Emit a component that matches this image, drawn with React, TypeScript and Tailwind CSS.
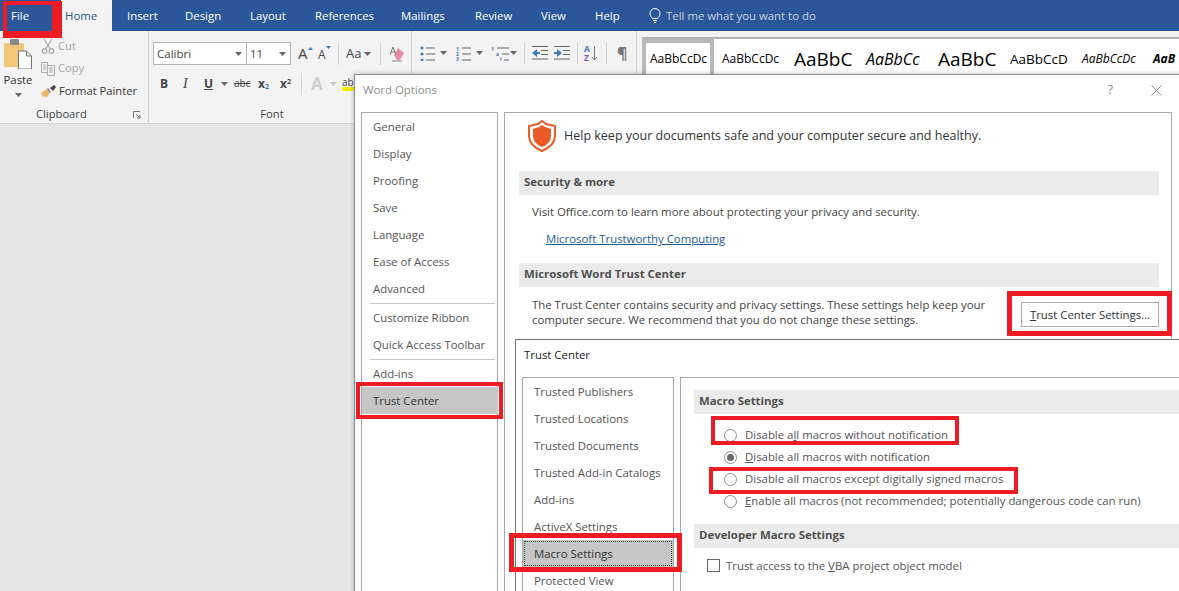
import React from "react";

const tabs: [string, number, string][] = [
  ["File", 61, "pl-[11px] text-white"],
  ["Home", 51, "pl-[4px] bg-[#f3f3f3] text-[#2b579a] justify-start"],
  ["Insert", 58, "pl-[15px] text-white"],
  ["Design", 65, "pl-[15px] text-white"],
  ["Layout", 65, "pl-[15px] text-white"],
  ["References", 86, "pl-[15px] text-white"],
  ["Mailings", 74, "pl-[15px] text-white"],
  ["Review", 66, "pl-[15px] text-white"],
  ["View", 54, "pl-[15px] text-white"],
  ["Help", 54, "pl-[15px] text-white"],
];

const Caret = ({ className = "" }: { className?: string }) => (
  <svg width="7" height="4" viewBox="0 0 7 4" className={className}>
    <path d="M0 0h7L3.5 4z" fill="#666" />
  </svg>
);

const Sep = ({ className = "" }: { className?: string }) => (
  <div className={"w-px bg-[#d2d2d2] " + className} />
);

function Clipboard() {
  return (
    <div className="w-[149px] shrink-0 border-r border-[#d2d2d2] flex flex-col h-full">
      <div className="flex h-[76px]">
        <div className="w-[36px] flex flex-col items-center pt-[8px]">
          <svg width="29" height="30" viewBox="0 0 29 30">
            <rect x="0" y="4" width="20" height="24" rx="1" fill="#f0c778" />
            <rect x="6" y="0" width="9" height="6" rx="1" fill="#8a8a8a" />
            <path d="M14.500 12h8l5 5v13h-13z" fill="#fff" stroke="#777" />
            <path d="M22.500 12v5h5" fill="none" stroke="#777" />
          </svg>
          <span className="text-[11.4px] leading-[16px] mt-[3px] text-[#333]">Paste</span>
          <Caret className="mt-[5px]" />
        </div>
        <div className="flex flex-col pt-[4px] pl-[5px] text-[11.2px]">
          <div className="flex items-center gap-[3px] text-[#a6a6a6] h-[22.500px]">
            <svg width="14" height="16" viewBox="0 0 14 16" fill="none" stroke="#adadad" strokeWidth="1.300">
              <circle cx="3.500" cy="13" r="2.300" />
              <circle cx="10.500" cy="13" r="2.300" />
              <path d="M4.500 11L11 1M9.500 11L3 1" />
            </svg>
            Cut
          </div>
          <div className="flex items-center gap-[3px] text-[#a6a6a6] h-[22.500px]">
            <svg width="14" height="14" viewBox="0 0 14 14" fill="none" stroke="#adadad">
              <path d="M.5.5h6v10h-6zM6.500 3.500h7v10h-7zM2 3h3M2 5h3M2 7h3M8 6h4M8 8h4M8 10h4" />
            </svg>
            Copy
          </div>
          <div className="flex items-center gap-[3px] text-[#333] h-[22.500px]">
            <svg width="15" height="14" viewBox="0 0 15 14">
              <path d="M0 9l6-4 3 4-4 5-1-2-2 1-1-2z" fill="#e9b96a" />
              <path d="M6 5l3 4 1-1-3-4z" fill="#777" />
              <path d="M9 4l4-3 2 2-3 4z" fill="#444" />
            </svg>
            Format Painter
          </div>
        </div>
      </div>
      <div className="flex items-center h-[15px] pl-[36px] text-[11.2px] text-[#444]">
        <span>Clipboard</span>
        <svg width="8" height="8" viewBox="0 0 8 8" className="ml-[46px]" fill="none" stroke="#777">
          <path d="M.5 7V.5H7M3 3l4 4M7 4v3H4" />
        </svg>
      </div>
    </div>
  );
}

function FontGroup() {
  return (
    <div className="w-[263px] shrink-0 border-r border-[#d2d2d2] flex flex-col h-full">
      <div className="flex items-center pl-[4px] pt-[11px] h-[34px] text-[#444]">
        <div className="w-[94px] h-[23px] bg-white border border-[#b5b5b5] flex items-center pl-[3px] pr-[4px] justify-between text-[11.5px]">
          Calibri <Caret />
        </div>
        <div className="w-[44px] h-[23px] bg-white border border-[#b5b5b5] border-l-0 flex items-center pl-[3px] pr-[4px] justify-between text-[11.5px]">
          11 <Caret />
        </div>
        <div className="ml-[7px] w-[20px] flex items-start text-[15px] leading-none">
          A
          <svg width="5" height="3" viewBox="0 0 5 3" className="mt-[1px]"><path d="M0 3h5L2.500 0z" fill="#3f7ab8" /></svg>
        </div>
        <div className="w-[20px] flex items-start text-[12px] leading-none mt-[3px]">
          A
          <svg width="5" height="3" viewBox="0 0 5 3" className="-mt-[3px]"><path d="M0 0h5L2.500 3z" fill="#3f7ab8" /></svg>
        </div>
        <Sep className="h-[22px]" />
        <div className="ml-[7px] w-[34px] flex items-center gap-[3px] text-[13px]">Aa<Caret /></div>
        <Sep className="h-[22px]" />
        <svg width="16" height="16" viewBox="0 0 16 16" className="ml-[9px]">
          <path d="M8 2l6 5-4 7H7L4 9z" fill="#eb8ba1" />
          <path d="M2 15h10" stroke="#888" />
          <path d="M0 9l3-8 3 8M1 6h4" fill="none" stroke="#777" />
        </svg>
      </div>
      <div className="flex items-center h-[27px] mt-[2px] pt-[6px] pl-[11px] text-[#444] text-[12px] font-bold">
        <span className="w-[23px]">B</span>
        <span className="w-[21px] italic font-['Liberation_Serif'] text-[14px] font-normal">I</span>
        <span className="w-[17px] underline">U</span>
        <Caret className="mr-[6px]" />
        <span className="w-[24px] text-[10px] font-normal line-through">abc</span>
        <span className="w-[22px]">x<sub className="text-[7px] text-[#2b7cd3]">2</sub></span>
        <span className="w-[21px]">x<sup className="text-[7px]">2</sup></span>
        <Sep className="h-[22px]" />
        <span className="ml-[9px] w-[19px] text-[#d0d0d0] text-[17px] font-bold">A</span>
        <Caret className="mr-[5px] opacity-30" />
        <div className="flex flex-col items-start">
          <span className="text-[10px] leading-[10px] font-normal">ab</span>
          <span className="w-[12px] h-[4px] bg-[#f2ec00]" />
        </div>
      </div>
      <div className="mt-auto mb-[2px] h-[15px] pr-[16px] text-center text-[11.2px] text-[#444]">Font</div>
    </div>
  );
}

function ParagraphGroup() {
  const line = "#666";
  return (
    <div className="w-[225px] shrink-0 border-r border-[#d2d2d2] flex flex-col h-full">
      <div className="flex items-center h-[33px] pt-[11px] pl-[8px]">
        <svg width="15" height="15" viewBox="0 0 15 15">
          <circle cx="2" cy="2" r="1.500" fill="#3f7ab8" />
          <circle cx="2" cy="8" r="1.500" fill="#3f7ab8" />
          <circle cx="2" cy="14" r="1.500" fill="#3f7ab8" />
          <path d="M6 2h9M6 8h9M6 14h9" stroke={line} />
        </svg>
        <Caret className="ml-[5px] mr-[9px]" />
        <svg width="15" height="15" viewBox="0 0 15 15">
          <text x="0" y="5" fontSize="5" fontWeight="700" fill="#3f7ab8">1</text>
          <text x="0" y="10" fontSize="5" fontWeight="700" fill="#3f7ab8">2</text>
          <text x="0" y="15" fontSize="5" fontWeight="700" fill="#3f7ab8">3</text>
          <path d="M6 2h9M6 8h9M6 14h9" stroke={line} />
        </svg>
        <Caret className="ml-[5px] mr-[8px]" />
        <svg width="18" height="15" viewBox="0 0 18 15">
          <text x="0" y="5" fontSize="5" fontWeight="700" fill="#3f7ab8">1</text>
          <text x="5" y="10" fontSize="5" fontWeight="700" fill="#3f7ab8">a</text>
          <text x="9" y="15" fontSize="5" fontWeight="700" fill="#3f7ab8">i</text>
          <path d="M6 2h12M11 8h7M13 14h5" stroke={line} />
        </svg>
        <Caret className="ml-[1px] mr-[7px]" />
        <Sep className="h-[22px]" />
        <svg width="16" height="14" viewBox="0 0 16 14" className="ml-[7px]">
          <path d="M0 7l5-4v3h3v2H5v3z" fill="#3f7ab8" />
          <path d="M0 .5h16M9 4.500h7M9 8.500h7M0 13h16" stroke={line} />
        </svg>
        <svg width="16" height="14" viewBox="0 0 16 14" className="ml-[6px]">
          <path d="M8 7L3 3v3H0v2h3v3z" fill="#3f7ab8" />
          <path d="M0 .5h16M9 4.500h7M9 8.500h7M0 13h16" stroke={line} />
        </svg>
        <Sep className="h-[22px] ml-[7px]" />
        <div className="ml-[6px] flex items-center gap-[1px]">
          <div className="flex flex-col text-[8.500px] font-bold">
            <span className="text-[#3f7ab8] h-[9px] leading-[9px] block overflow-hidden">A</span>
            <span className="text-[#8a5fa8] h-[9px] leading-[9px] block overflow-hidden">Z</span>
          </div>
          <svg width="7" height="16" viewBox="0 0 7 16">
            <path d="M3.500 1v14M1 12l2.500 3 2.500-3" fill="none" stroke="#777" />
          </svg>
        </div>
        <Sep className="h-[22px] ml-[8px]" />
        <span className="ml-[10px] text-[#777] text-[16px] leading-none font-bold">¶</span>
      </div>
    </div>
  );
}

const styles: [string, string][] = [
  ["AaBbCcDc", "w-[72px] pl-[4px] text-[12px] border-[4px] border-[#b9b9b9]"],
  ["AaBbCcDc", "w-[72px] pl-[8px] text-[12px]"],
  ["AaBbC", "w-[72px] pl-[8px] text-[19px]"],
  ["AaBbCc", "w-[72px] pl-[8px] text-[16px] italic font-medium"],
  ["AaBbC", "w-[72px] pl-[8px] text-[19px]"],
  ["AaBbCcD", "w-[72px] pl-[8px] text-[13.500px]"],
  ["AaBbCcDc", "w-[72px] pl-[8px] text-[12px] italic text-[#444]"],
  ["AaB", "w-[33px] pl-[7px] text-[12px] italic font-bold"],
];

function Gallery() {
  return (
    <div className="ml-[5px] mt-[6px] h-[37px] flex-1 border-t-2 border-[#b4b4b4] bg-white flex overflow-hidden">
      {styles.map(([t, c], i) => (
        <div key={i} className={"shrink-0 h-[40px] overflow-hidden flex items-center whitespace-nowrap text-black " + c}>
          {t}
        </div>
      ))}
    </div>
  );
}

function Band({ children }: { children: React.ReactNode }) {
  return (
    <div className="h-[24px] bg-[#ebebeb] flex items-center pl-[5px] pb-[2px] font-bold text-[#505050] whitespace-nowrap">
      {children}
    </div>
  );
}

const NavItem = ({ children, className = "" }: { children: React.ReactNode; className?: string }) => (
  <div className={"h-[27px] flex items-center whitespace-nowrap " + className}>{children}</div>
);

function Radio({ checked = false, children }: { checked?: boolean; children: React.ReactNode }) {
  return (
    <div className="h-[22px] flex items-center whitespace-nowrap">
      <span className="w-[13px] h-[13px] rounded-full border border-[#8f8f8f] bg-white flex items-center justify-center mr-[8px] shrink-0">
        {checked && <span className="w-[7px] h-[7px] rounded-full bg-[#6a6a6a]" />}
      </span>
      <span>{children}</span>
    </div>
  );
}

function WordOptions() {
  return (
    <div className="absolute left-[354px] top-[74px] w-[830px] h-[530px] bg-white border border-[#8c8c8c] flex flex-col shadow-[0_0_5px_rgba(0,0,0,0.25)]">
      <div className="h-[37px] shrink-0 flex items-center pl-[8px] pb-[7px] text-[#8d8d8d]">
        Word Options
        <span className="ml-auto mr-[38px] text-[13px]">?</span>
        <svg width="11" height="11" viewBox="0 0 11 11" className="mr-[21px]" stroke="#8d8d8d" fill="none">
          <path d="M.5.5l10 10M10.500.5l-10 10" />
        </svg>
      </div>
      <div className="flex flex-1 pl-[6px] pr-[11px] gap-[6px]">
        <div className="w-[137px] h-full border border-[#a8a8a8] pl-[11px] text-[#555]">
          {["General", "Display", "Proofing", "Save", "Language", "Ease of Access", "Advanced"].map((t) => (
            <NavItem key={t}>{t}</NavItem>
          ))}
          <div className="-ml-[3px] mr-[2px] border-t border-[#c8c8c8] mt-[1px]" />
          {["Customize Ribbon", "Quick Access Toolbar"].map((t) => (
            <NavItem key={t}>{t}</NavItem>
          ))}
          <div className="-ml-[3px] mr-[2px] border-t border-[#c8c8c8] mt-[1px]" />
          <NavItem>Add-ins</NavItem>
          <NavItem className="-ml-[11px] pl-[11px] bg-[#c6c6c6] -mr-px text-[#333]">Trust Center</NavItem>
        </div>
        <div className="flex-1 h-full border border-[#a8a8a8] pl-[14px] pr-[12px] text-[#444]">
          <div className="flex items-center h-[58px] pb-[12px]">
            <svg width="28" height="32" viewBox="0 0 28 32" className="ml-[9px] mr-[8px]">
              <path d="M14 1l4 3 9 2v10c0 7-6 12-13 15C7 28 1 23 1 16V6l9-2z" fill="none" stroke="#ea5a26" strokeWidth="2" />
              <path d="M14 5l3 2 6 2v7c0 5-4 9-9 11-5-2-9-6-9-11V9l6-2z" fill="#ea5a26" />
            </svg>
            <span className="text-[12.500px] text-[#333] whitespace-nowrap">Help keep your documents safe and your computer secure and healthy.</span>
          </div>
          <Band>Security &amp; more</Band>
          <div className="pl-[13px] h-[32px] flex items-center pt-[2px]">Visit Office.com to learn more about protecting your privacy and security.</div>
          <div className="pl-[27px] h-[24px] flex items-center text-[#1c5c97] underline">Microsoft Trustworthy Computing</div>
          <div className="h-[12px]" />
          <Band>Microsoft Word Trust Center</Band>
          <div className="flex pl-[13px] pt-[10px] leading-[15px] items-start">
            <div className="w-[470px]">The Trust Center contains security and privacy settings. These settings help keep your computer secure. We recommend that you do not change these settings.</div>
            <div className="ml-auto w-[138px] h-[25px] mt-[5px] border border-[#adadad] flex items-center justify-center whitespace-nowrap text-[#333]">
              <span><u>T</u>rust Center Settings...</span>
            </div>
          </div>
        </div>
      </div>
    </div>
  );
}

function TrustCenter() {
  return (
    <div className="absolute left-[515px] top-[339px] w-[700px] h-[300px] bg-white border border-[#7a7a7a] flex flex-col">
      <div className="h-[37px] shrink-0 flex items-center pl-[8px] pb-[8px] text-[#222]">Trust Center</div>
      <div className="flex flex-1 pl-[6px] gap-[6px]">
        <div className="w-[152px] h-full border border-[#a8a8a8] pl-[11px] text-[#555]">
          {["Trusted Publishers", "Trusted Locations", "Trusted Documents", "Trusted Add-in Catalogs", "Add-ins", "ActiveX Settings"].map((t) => (
            <NavItem key={t}>{t}</NavItem>
          ))}
          <NavItem className="-ml-[11px] pl-[11px] bg-[#c6c6c6] text-[#333] outline-1 outline-dotted -outline-offset-2 outline-[#333]">Macro Settings</NavItem>
          <NavItem>Protected View</NavItem>
        </div>
        <div className="flex-1 h-full border border-[#a8a8a8] pl-[13px] pt-[12px] text-[#555]">
          <Band>Macro Settings</Band>
          <div className="pl-[30px] pt-[10px]">
            <Radio>Disable a<u>l</u>l macros without notification</Radio>
            <Radio checked><u>D</u>isable all macros with notification</Radio>
            <Radio>Disable all macros except di<u>g</u>itally signed macros</Radio>
            <Radio><u>E</u>nable all macros (not recommended; potentially dangerous code can run)</Radio>
          </div>
          <div className="h-[12px]" />
          <Band>Developer Macro Settings</Band>
          <div className="flex items-center pl-[13px] pt-[9px] whitespace-nowrap">
            <span className="w-[13px] h-[13px] border border-[#666] bg-white mr-[6px]" />
            <span>Trust access to the <u>V</u>BA project object model</span>
          </div>
        </div>
      </div>
    </div>
  );
}

const Mark = ({ className }: { className: string }) => (
  <div className={"absolute border-[#ed1c24] pointer-events-none " + className} />
);

export default function App() {
  return (
    <div className="relative w-[1179px] h-[591px] overflow-hidden bg-[#e6e6e6] font-['Open_Sans',sans-serif] text-[11.4px]">
      <div className="h-[31px] bg-[#2b579a] flex items-center">
        {tabs.map(([t, w, c]) => (
          <div key={t} className={"h-full flex items-center " + c} style={{ width: w }}>{t}</div>
        ))}
        <svg width="12" height="15" viewBox="0 0 12 15" className="ml-[15px] mr-[5px]" fill="none" stroke="#fff">
          <path d="M3.500 10.500C2.500 9 1 8 1 5.500a5 5 0 0 1 10 0C11 8 9.500 9 8.500 10.500zM4 12.500h4M5 14.500h2" />
        </svg>
        <span className="text-[#c7d3e6]">Tell me what you want to do</span>
      </div>
      <div className="h-[93px] bg-[#f3f3f3] border-b border-[#d4d4d4] flex">
        <Clipboard />
        <FontGroup />
        <ParagraphGroup />
        <Gallery />
      </div>
      <WordOptions />
      <TrustCenter />
      <Mark className="left-[3px] top-[1px] w-[59px] h-[37px] border-t-[4px] border-l-[4px] border-r-[10px] border-b-[7px]" />
      <Mark className="left-[356px] top-[382px] w-[147px] h-[37px] border-[4px]" />
      <Mark className="left-[1007px] top-[291px] w-[165px] h-[45px] border-[5px]" />
      <Mark className="left-[509px] top-[533px] w-[173px] h-[39px] border-[5px]" />
      <Mark className="left-[711px] top-[416px] w-[248px] h-[29px] border-[4px]" />
      <Mark className="left-[709px] top-[467px] w-[309px] h-[27px] border-[4px]" />
    </div>
  );
}
